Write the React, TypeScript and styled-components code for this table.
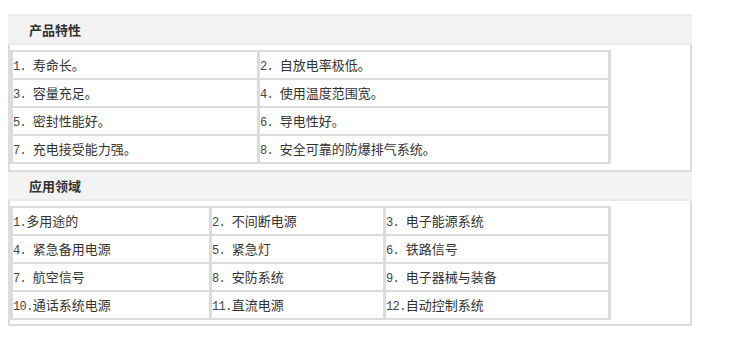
import styled, { createGlobalStyle } from "styled-components";

const GlobalStyle = createGlobalStyle`
  body {
    margin: 8px;
    background: #fff;
    font-family: "Noto Sans CJK SC", "Liberation Sans", sans-serif;
    color: #333;
  }
`;

const Wrapper = styled.div`
  width: 684px;
  margin-top: 6px;
`;

const Section = styled.section`
  display: flex;
  flex-direction: column;
`;

const Header = styled.div<{ $top?: boolean }>`
  height: 27px;
  line-height: 27px;
  padding-left: 21px;
  background: #f3f3f3;
  border-top: ${(p) => (p.$top ? "2px solid #ebebeb" : "none")};
  border-bottom: 2px solid #ebebeb;
  font-size: 13px;
  font-weight: bold;
  color: #333;
`;

const Body = styled.div<{ $pb: number }>`
  border: 2px solid #dcdcdc;
  border-top: none;
  padding: 5px 0 ${(p) => p.$pb}px 0;
`;

const Grid = styled.div<{ $cols: string }>`
  display: grid;
  width: max-content;
  grid-template-columns: ${(p) => p.$cols};
  grid-auto-rows: 26px;
  gap: 2px 3px;
  padding: 2px 3px;
  background: #dcdcdc;
`;

const Cell = styled.div`
  background: #fff;
  font-size: 13px;
  line-height: 26px;
  color: #333;
  white-space: nowrap;
  overflow: hidden;
`;

const Num = styled.span`
  font-family: "Liberation Mono", monospace;
  font-size: 12px;
  letter-spacing: -0.6px;
  color: #444;
  white-space: pre;
`;

const features: [string, string][] = [
  ["1. ", "寿命长。"],
  ["2. ", "自放电率极低。"],
  ["3. ", "容量充足。"],
  ["4. ", "使用温度范围宽。"],
  ["5. ", "密封性能好。"],
  ["6. ", "导电性好。"],
  ["7. ", "充电接受能力强。"],
  ["8. ", "安全可靠的防爆排气系统。"],
];

const uses: [string, string][] = [
  ["1.", "多用途的"],
  ["2. ", "不间断电源"],
  ["3. ", "电子能源系统"],
  ["4. ", "紧急备用电源"],
  ["5. ", "紧急灯"],
  ["6. ", "铁路信号"],
  ["7. ", "航空信号"],
  ["8. ", "安防系统"],
  ["9. ", "电子器械与装备"],
  ["10.", "通话系统电源"],
  ["11.", "直流电源"],
  ["12.", "自动控制系统"],
];

function Items({ list }: { list: [string, string][] }) {
  return (
    <>
      {list.map(([n, t], i) => (
        <Cell key={i}>
          <Num>{n}</Num>
          {t}
        </Cell>
      ))}
    </>
  );
}

export default function App() {
  return (
    <>
      <GlobalStyle />
      <Wrapper>
        <Section>
          <Header $top>产品特性</Header>
          <Body $pb={6}>
            <Grid $cols="244px 348px">
              <Items list={features} />
            </Grid>
          </Body>
        </Section>
        <Section>
          <Header>应用领域</Header>
          <Body $pb={4}>
            <Grid $cols="196px 171px 222px">
              <Items list={uses} />
            </Grid>
          </Body>
        </Section>
      </Wrapper>
    </>
  );
}
